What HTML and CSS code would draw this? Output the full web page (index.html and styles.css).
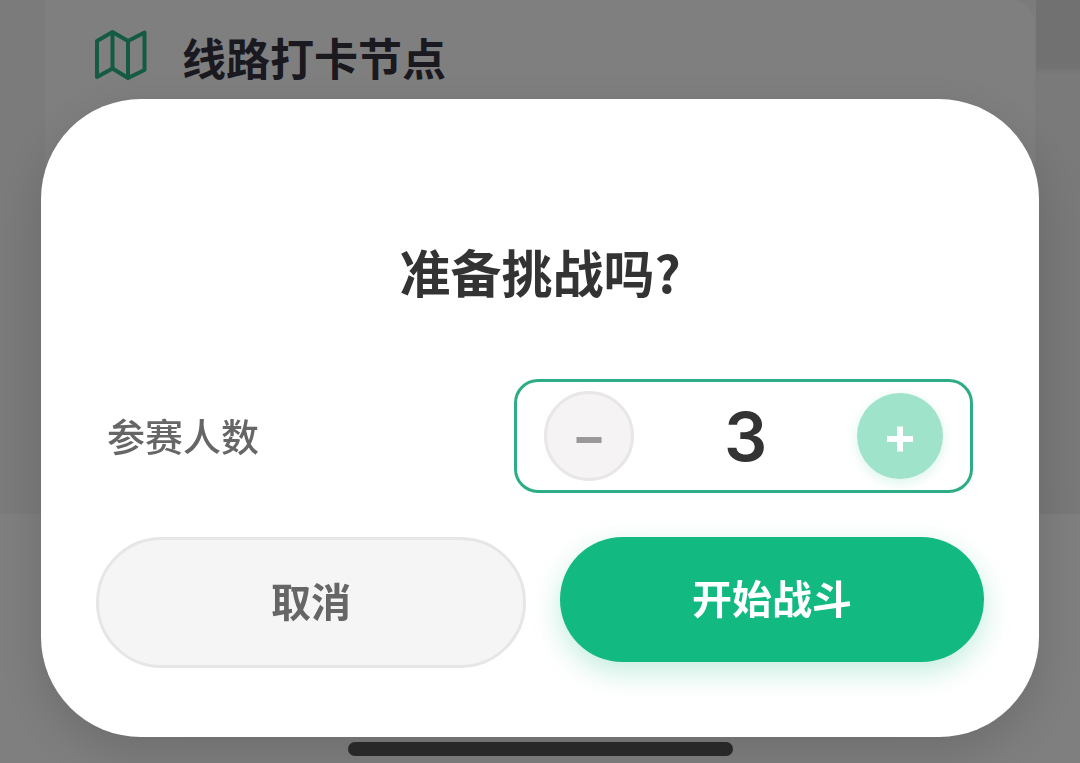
FILE: index.html
```html
<!DOCTYPE html>
<html lang="zh-CN">
<head>
  <meta charset="UTF-8" />
  <meta name="viewport" content="width=device-width, initial-scale=1.0"/>
  <title>准备挑战吗?</title>
  <link rel="stylesheet" href="styles.css">
</head>
<body>
  <main class="page">
    <section class="panel">
      <svg class="map-icon" viewBox="0 0 52 52" aria-hidden="true">
        <path d="M2 13 L17.500 4 L33 13 L49.500 4.500 V42 L33 50 L17.500 40.500 L2 49 Z"/>
        <path d="M17.500 4 V40 M33 13 V50"/>
      </svg>
      <h1 class="panel-title">线路打卡节点</h1>
    </section>
    <div class="bottom-area"></div>
  </main>

  <div class="overlay">
    <form class="dialog" id="battleForm" role="dialog" aria-labelledby="dialogTitle">
      <h2 class="dialog-title" id="dialogTitle">准备挑战吗?</h2>

      <div class="row">
        <label class="row-label" for="count">参赛人数</label>
        <div class="stepper">
          <button type="button" class="step step-minus" id="minus" aria-label="减少">
            <svg viewBox="0 0 40 40" aria-hidden="true"><path d="M7.500 24 H32.500"/></svg>
          </button>
          <input type="text" class="count" id="count" value="3" inputmode="numeric" />
          <button type="button" class="step step-plus" id="plus" aria-label="增加">
            <svg viewBox="0 0 40 40" aria-hidden="true"><path d="M7 23 H33 M20 10.500 V35.500"/></svg>
          </button>
        </div>
      </div>

      <div class="actions">
        <button type="button" class="btn btn-cancel">取消</button>
        <button type="button" class="btn btn-start">开始战斗</button>
      </div>
    </form>
    <div class="home-bar"></div>
  </div>

  <script>
    const count = document.getElementById("count");

    function changeCount(step) {
      const value = parseInt(count.value) || 1;
      count.value = Math.max(1, value + step);
    }

    document.getElementById("minus").onclick = () => changeCount(-1);
    document.getElementById("plus").onclick = () => changeCount(1);
  </script>
</body>
</html>
```

FILE: styles.css
```css
body {
  margin: 0;
  font-family: "Noto Sans CJK SC", sans-serif;
  color: #333;
}
button, input {
  font-family: inherit;
  margin: 0;
  padding: 0;
  border: none;
}

/* page behind the dialog */
.page {
  display: flex;
  flex-direction: column;
  min-height: 100vh;
  background: linear-gradient(#e2e2e2 0 66px, #f4f4f4 74px, #f0f0f0 100%) right / 44px 100% no-repeat #f6f6f6;
}
.panel {
  display: flex;
  align-items: flex-start;
  gap: 35px;
  box-sizing: border-box;
  min-height: 514px;
  margin: 0 45px;
  padding: 28px 50px;
  background: #fff;
  border-radius: 0 24px 0 0;
}
.map-icon {
  width: 52px;
  height: 52px;
  fill: none;
  stroke: #2bb585;
  stroke-width: 4;
  stroke-linejoin: round;
}
.panel-title {
  margin: 0;
  font-size: 44px;
  line-height: 58px;
  font-weight: 700;
  color: #33333f;
}
.bottom-area {
  flex: 1;
  background: #fff;
}

/* dialog */
.overlay {
  position: fixed;
  inset: 0;
  display: flex;
  flex-direction: column;
  justify-content: flex-end;
  align-items: center;
  gap: 5px;
  padding: 0 41px 7px;
  background: rgba(0, 0, 0, 0.5);
}
.dialog {
  align-self: stretch;
  padding: 137px 55px 69px;
  background: #fff;
  border-radius: 100px;
  box-shadow: 0 16px 50px rgba(0, 0, 0, 0.15);
}
.dialog-title {
  margin: 0;
  text-align: center;
  font-size: 51px;
  line-height: 70px;
  font-weight: 700;
}
.row {
  display: flex;
  align-items: center;
  justify-content: space-between;
  margin: 73px 11px 44px;
}
.row-label {
  padding-bottom: 4px;
  font-size: 38px;
  font-weight: 500;
  color: #666;
}
.stepper {
  display: flex;
  align-items: center;
  justify-content: space-between;
  box-sizing: border-box;
  width: 53%;
  padding: 9px 27px;
  border: 3px solid #2eac86;
  border-radius: 24px;
}
.step {
  display: flex;
  align-items: center;
  justify-content: center;
  box-sizing: border-box;
  width: 86px;
  height: 86px;
  border-radius: 50%;
  cursor: pointer;
}
.step svg {
  width: 40px;
  height: 40px;
  fill: none;
  stroke: currentColor;
  stroke-width: 6;
}
.step-minus {
  width: 90px;
  height: 90px;
  background: #f5f3f4;
  border: 3px solid #e8e6e7;
  color: #999;
}
.step-plus {
  background: #9fe3cb;
  color: #fff;
  box-shadow: 0 4px 12px rgba(16, 185, 129, 0.15);
}
.count {
  width: 120px;
  height: 86px;
  background: none;
  text-align: center;
  font-family: Inter, sans-serif;
  font-size: 68px;
  font-weight: 600;
  color: #333;
}

.actions {
  display: flex;
  align-items: flex-start;
  gap: 34px;
}
.btn {
  box-sizing: content-box;
  flex: 1;
  padding: 31px 0 35px;
  border-radius: 66px;
  font-size: 40px;
  line-height: 59px;
  font-weight: 700;
  cursor: pointer;
}
.btn-cancel {
  background: #f5f5f5;
  border: 3px solid #e6e6e6;
  color: #666;
}
.btn-start {
  background: #12b981;
  color: #fff;
  box-shadow: 0 10px 28px rgba(16, 185, 129, 0.25);
}

.home-bar {
  width: 385px;
  height: 14px;
  border-radius: 7px;
  background: #282828;
}
```
